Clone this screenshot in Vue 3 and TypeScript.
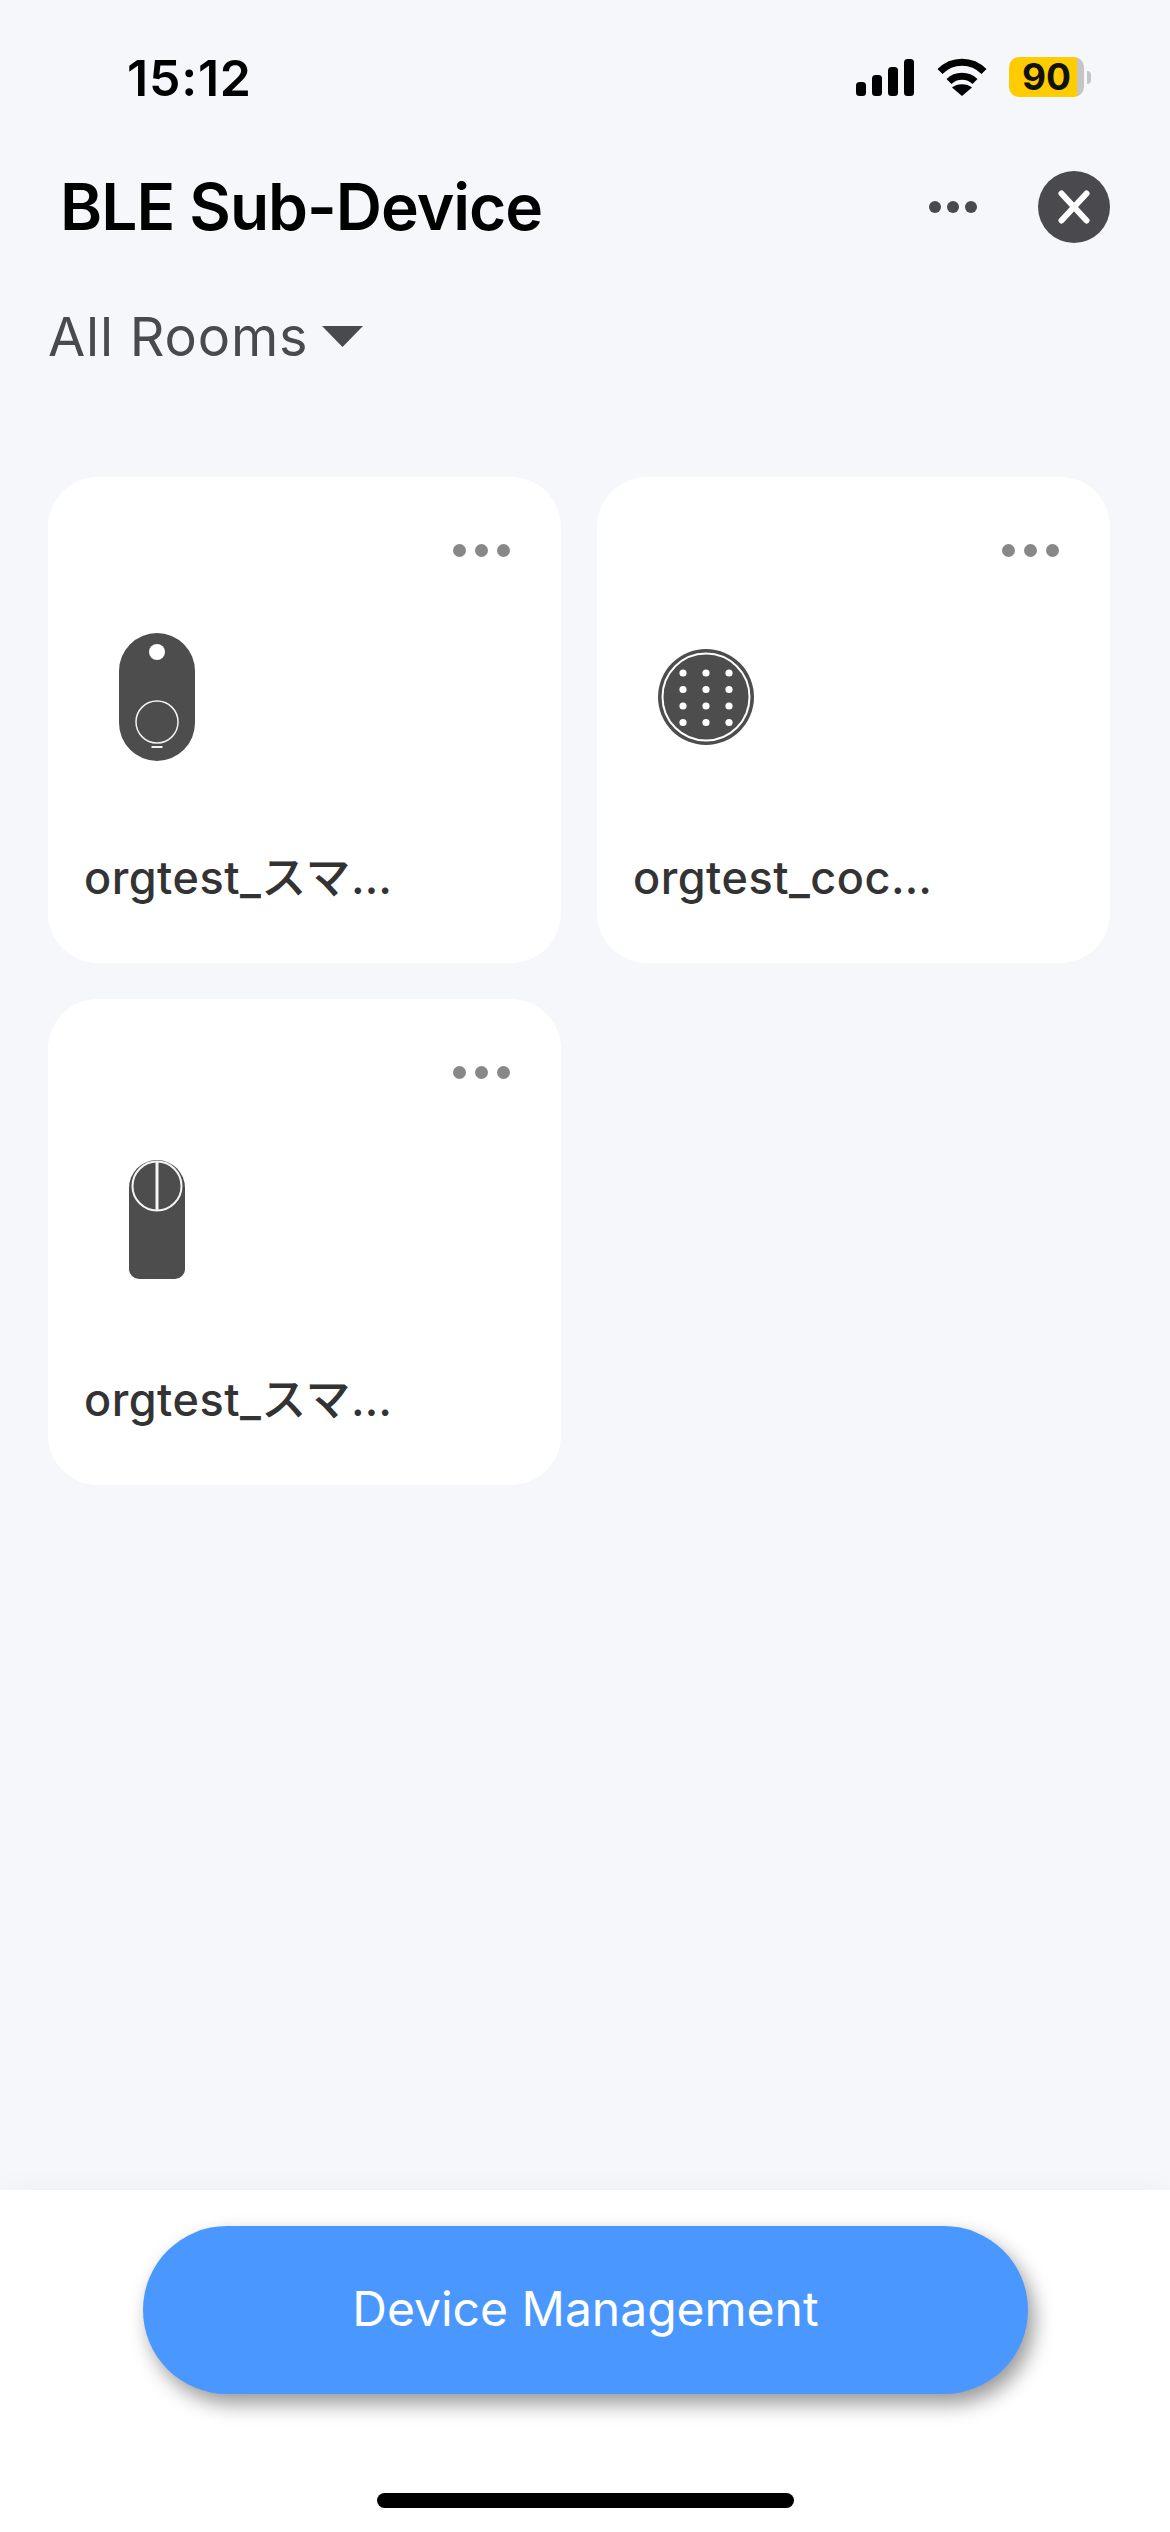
<script setup lang="ts">
interface Device { name: string; kind: 'tag' | 'pad' | 'lock' }
const rows: Device[] = [
  { name: 'orgtest_スマ…', kind: 'tag' },
  { name: 'orgtest_coc…', kind: 'pad' },
  { name: 'orgtest_スマ…', kind: 'lock' },
]
const padDots: { x: number; y: number }[] = []
for (const y of [56, 72.5, 89, 105.5]) for (const x of [57, 80, 103]) padDots.push({ x, y })
</script>

<template>
  <div class="page">
    <div class="status">
      <span class="time">15:12</span>
      <div class="status-icons">
        <div class="signal"><i class="b1"></i><i class="b2"></i><i class="b3"></i><i class="b4"></i></div>
        <svg class="wifi" width="50" height="38" viewBox="0 0 50 38">
          <path d="M3 13.5C15 1 35 1 47 13.5" fill="none" stroke="#000" stroke-width="7" />
          <path d="M12 23.5C19 16.5 31 16.5 38 23.5" fill="none" stroke="#000" stroke-width="7" />
          <path d="M25 38L15 29.5C20 25 30 25 35 29.5Z" fill="#000" />
        </svg>
        <div class="battery"><div class="cell"><span>90</span></div><div class="nub"></div></div>
      </div>
    </div>

    <header class="head">
      <h1>BLE Sub-Device</h1>
      <div class="head-more"><i></i><i></i><i></i></div>
      <div class="close">
        <svg width="32" height="34" viewBox="0 0 32 34">
          <path d="M3.5 3.5L28.5 30.5M28.5 3.5L3.5 30.5" fill="none" stroke="#fff" stroke-width="6" stroke-linecap="round" />
        </svg>
      </div>
    </header>

    <div class="rooms">
      <span>All Rooms</span>
      <svg width="41" height="21" viewBox="0 0 41 21"><path d="M0 0H41L20.5 21Z" fill="#4a4a4c" /></svg>
    </div>

    <main class="grid">
      <article v-for="(d, i) in rows" :key="i" class="card">
        <div class="more"><i></i><i></i><i></i></div>
        <svg class="icon" width="160" height="160" viewBox="0 0 160 160">
          <template v-if="d.kind === 'tag'">
            <rect x="42" y="16" width="76" height="128" rx="38" fill="#4d4d4d" />
            <circle cx="80" cy="35" r="8" fill="#fff" />
            <circle cx="80" cy="105" r="21" fill="none" stroke="#f2f2f2" stroke-width="1.5" />
            <rect x="74.5" y="129" width="11" height="2" fill="#f2f2f2" />
          </template>
          <template v-else-if="d.kind === 'pad'">
            <circle cx="80" cy="80" r="48" fill="#4d4d4d" />
            <circle cx="80" cy="80" r="43.5" fill="none" stroke="#fff" stroke-width="2" />
            <circle v-for="(p, k) in padDots" :key="k" :cx="p.x" :cy="p.y" r="3.6" fill="#fff" />
          </template>
          <template v-else>
            <path d="M52 49a28 28 0 0 1 56 0V130a10 10 0 0 1-10 10H62a10 10 0 0 1-10-10Z" fill="#4d4d4d" />
            <circle cx="80" cy="47" r="24.5" fill="none" stroke="#f5f5f5" stroke-width="2" />
            <path d="M80 22V72" stroke="#f5f5f5" stroke-width="3" />
          </template>
        </svg>
        <div class="name">{{ d.name }}</div>
      </article>
    </main>

    <footer class="foot">
      <div class="btn">Device Management</div>
      <div class="home"></div>
    </footer>
  </div>
</template>

<style scoped>
.page {
  width: 1170px;
  height: 2532px;
  display: flex;
  flex-direction: column;
  overflow: hidden;
  background: #f6f7fb;
  font-family: Inter, "Noto Sans CJK JP", sans-serif;
}
i { display: block; }
.status {
  height: 100px;
  flex: none;
  box-sizing: border-box;
  padding: 52px 79px 0 127px;
  display: flex;
  justify-content: space-between;
  align-items: flex-start;
}
.time {
  font-size: 50px;
  line-height: 52px;
  font-weight: 600;
  color: #000;
  letter-spacing: 0.8px;
}
.status-icons { display: flex; align-items: flex-start; margin-top: 5px; }
.signal { display: flex; align-items: flex-end; gap: 6px; height: 37px; margin-top: 2px; }
.signal i { width: 10px; background: #000; border-radius: 3.5px; }
.b1 { height: 14px; }
.b2 { height: 21px; }
.b3 { height: 29px; }
.b4 { height: 37px; }
.wifi { margin: 1px 22px 0 23px; }
.battery { display: flex; align-items: center; height: 40px; }
.cell {
  width: 75px;
  height: 40px;
  box-sizing: border-box;
  background: linear-gradient(90deg, #ffcc00 68px, #c5c5c9 68px);
  border-radius: 10px;
  display: flex;
  align-items: center;
  padding-left: 13px;
}
.cell span {
  font-size: 37px;
  line-height: 40px;
  font-weight: 700;
  color: #111;
}
.nub { width: 4px; height: 13px; margin-left: 3px; background: #c5c5c9; border-radius: 0 4px 4px 0; }

.head {
  height: 72px;
  flex: none;
  margin-top: 71px;
  padding: 0 60px 0 60px;
  display: flex;
  align-items: center;
}
.head h1 {
  margin: 0;
  flex: 1;
  font-size: 64px;
  line-height: 72px;
  font-weight: 600;
  letter-spacing: -1px;
  color: #000;
}
.head-more { display: flex; gap: 6px; margin-right: 61px; }
.head-more i { width: 12px; height: 12px; border-radius: 50%; background: #4a4a4e; }
.close {
  width: 72px;
  height: 72px;
  border-radius: 50%;
  background: #4a4a4e;
  display: flex;
  align-items: center;
  justify-content: center;
}
.rooms {
  margin-top: 62px;
  padding-left: 48px;
  height: 64px;
  flex: none;
  display: flex;
  align-items: flex-start;
  color: #4a4a4c;
  font-size: 54px;
  line-height: 64px;
  letter-spacing: 0.8px;
}
.rooms svg { margin: 21px 0 0 14px; }
.grid {
  flex: 1;
  margin-top: 108px;
  padding: 0 60px 0 48px;
  display: grid;
  grid-template-columns: 513px 513px;
  grid-auto-rows: 486px;
  column-gap: 36px;
  row-gap: 36px;
  align-content: start;
}
.card {
  background: #fff;
  border-radius: 50px;
  display: flex;
  flex-direction: column;
}
.more { display: flex; gap: 9px; align-self: flex-end; margin: 67px 51px 0 0; }
.more i { width: 13px; height: 13px; border-radius: 50%; background: #888; }
.icon { display: block; margin: 60px 0 0 29px; flex: none; }
.name {
  margin: 73px 0 0 36px;
  font-size: 45px;
  font-weight: 500;
  line-height: 56px;
  letter-spacing: 0.5px;
  color: #333;
}
.foot {
  height: 342px;
  flex: none;
  background: #fff;
  box-shadow: 0 -6px 24px rgba(0, 0, 0, 0.025);
  display: flex;
  flex-direction: column;
  align-items: center;
  position: relative;
}
.btn {
  width: 885px;
  height: 168px;
  box-sizing: border-box;
  padding-bottom: 4px;
  margin: 36px 0 0 1px;
  border-radius: 84px;
  background: #4a98ff;
  box-shadow: 6px 10px 20px rgba(0, 0, 0, 0.4);
  color: #fff;
  font-size: 48px;
  display: flex;
  align-items: center;
  justify-content: center;
}
.home {
  width: 417px;
  height: 15px;
  margin-top: 99px;
  border-radius: 8px;
  background: #000;
}
</style>
